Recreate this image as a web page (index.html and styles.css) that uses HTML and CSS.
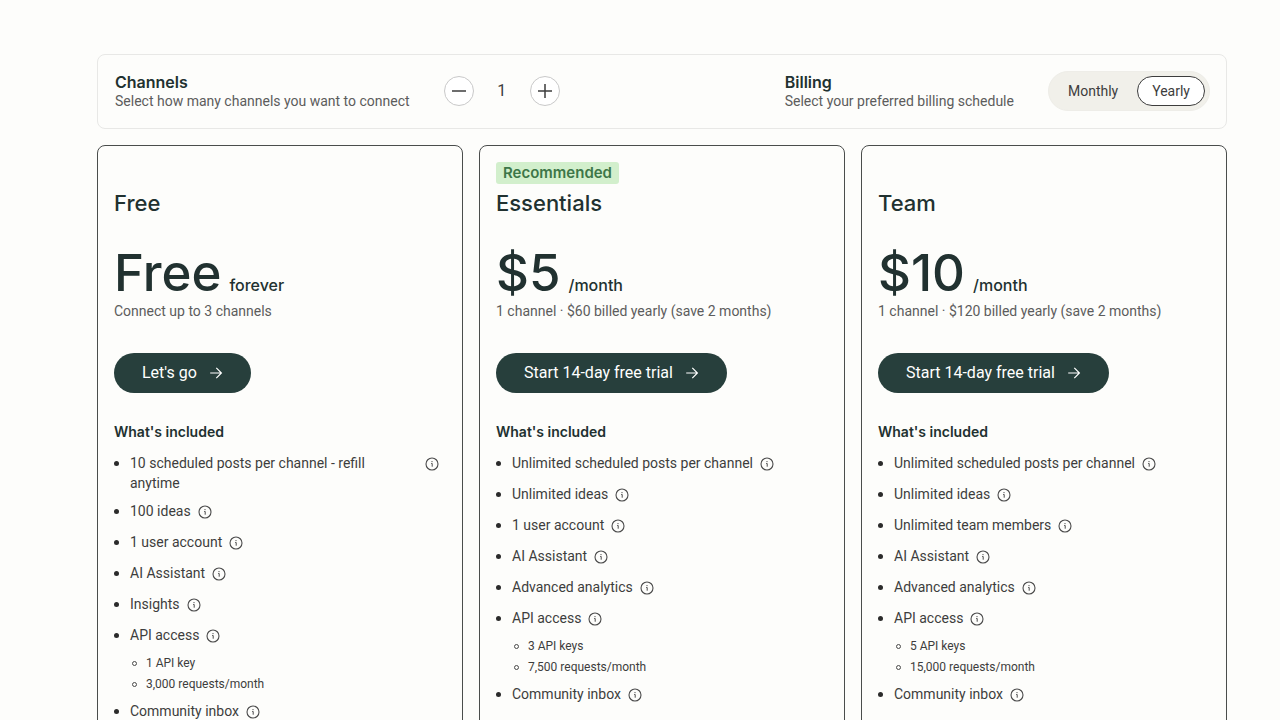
FILE: index.html
```
<!DOCTYPE html>
<html lang="en">
<head>
<meta charset="utf-8">
<meta name="viewport" content="width=device-width, initial-scale=1">
<title>Pricing</title>
<link rel="stylesheet" href="styles.css">
</head>
<body>
<svg class="sprite" aria-hidden="true">
  <symbol id="info" viewBox="0 0 14 14"><circle cx="7" cy="7" r="6" fill="none" stroke="currentColor" stroke-width="1.1"/><path d="M6.2 6.5H7.2V9.7" fill="none" stroke="currentColor"/><circle cx="7" cy="4.6" r=".65" fill="currentColor"/></symbol>
  <symbol id="arrow" viewBox="0 0 14 14"><path d="M1.2 7H12.4M7.3 1.9L12.4 7L7.3 12.1" fill="none" stroke="currentColor" stroke-width="1.2"/></symbol>
</svg>
<main class="page">
  <section class="options">
    <div class="option">
      <div>
        <h2 class="option-title">Channels</h2>
        <p class="option-text">Select how many channels you want to connect</p>
      </div>
      <div class="stepper">
        <button class="step" type="button" aria-label="Remove channel"><svg class="step-icon" viewBox="0 0 16 16"><path d="M1 8H15" stroke="currentColor" stroke-width="1.5"/></svg></button>
        <output class="count">1</output>
        <button class="step" type="button" aria-label="Add channel"><svg class="step-icon" viewBox="0 0 16 16"><path d="M1 8H15M8 1V15" stroke="currentColor" stroke-width="1.5"/></svg></button>
      </div>
    </div>
    <div class="option">
      <div>
        <h2 class="option-title">Billing</h2>
        <p class="option-text">Select your preferred billing schedule</p>
      </div>
      <div class="toggle">
        <button class="period" type="button" aria-pressed="false">Monthly</button>
        <button class="period period-on" type="button" aria-pressed="true">Yearly</button>
      </div>
    </div>
  </section>

  <section class="plans">
    <article class="plan">
      <div class="tag-row"></div>
      <h2 class="plan-name">Free</h2>
      <p class="price"><span class="amount">Free</span><span class="per">forever</span></p>
      <p class="terms">Connect up to 3 channels</p>
      <button class="cta" type="button">Let's go <svg class="arrow"><use href="#arrow"/></svg></button>
      <h3 class="included">What's included</h3>
      <ul class="features">
        <li class="feature"><span class="label">10 scheduled posts per channel - refill anytime</span><button class="info" type="button" aria-label="More info"><svg class="info-icon"><use href="#info"/></svg></button></li>
        <li class="feature"><span class="label">100 ideas</span><button class="info" type="button" aria-label="More info"><svg class="info-icon"><use href="#info"/></svg></button></li>
        <li class="feature"><span class="label">1 user account</span><button class="info" type="button" aria-label="More info"><svg class="info-icon"><use href="#info"/></svg></button></li>
        <li class="feature"><span class="label">AI Assistant</span><button class="info" type="button" aria-label="More info"><svg class="info-icon"><use href="#info"/></svg></button></li>
        <li class="feature"><span class="label">Insights</span><button class="info" type="button" aria-label="More info"><svg class="info-icon"><use href="#info"/></svg></button></li>
        <li class="feature"><span class="label">API access</span><button class="info" type="button" aria-label="More info"><svg class="info-icon"><use href="#info"/></svg></button>
          <ul class="details"><li class="detail">1 API key</li><li class="detail">3,000 requests/month</li></ul></li>
        <li class="feature"><span class="label">Community inbox</span><button class="info" type="button" aria-label="More info"><svg class="info-icon"><use href="#info"/></svg></button></li>
      </ul>
    </article>

    <article class="plan">
      <div class="tag-row"><span class="tag">Recommended</span></div>
      <h2 class="plan-name">Essentials</h2>
      <p class="price"><span class="amount">$5</span><span class="per">/month</span></p>
      <p class="terms">1 channel · $60 billed yearly (save 2 months)</p>
      <button class="cta" type="button">Start 14-day free trial <svg class="arrow"><use href="#arrow"/></svg></button>
      <h3 class="included">What's included</h3>
      <ul class="features">
        <li class="feature"><span class="label">Unlimited scheduled posts per channel</span><button class="info" type="button" aria-label="More info"><svg class="info-icon"><use href="#info"/></svg></button></li>
        <li class="feature"><span class="label">Unlimited ideas</span><button class="info" type="button" aria-label="More info"><svg class="info-icon"><use href="#info"/></svg></button></li>
        <li class="feature"><span class="label">1 user account</span><button class="info" type="button" aria-label="More info"><svg class="info-icon"><use href="#info"/></svg></button></li>
        <li class="feature"><span class="label">AI Assistant</span><button class="info" type="button" aria-label="More info"><svg class="info-icon"><use href="#info"/></svg></button></li>
        <li class="feature"><span class="label">Advanced analytics</span><button class="info" type="button" aria-label="More info"><svg class="info-icon"><use href="#info"/></svg></button></li>
        <li class="feature"><span class="label">API access</span><button class="info" type="button" aria-label="More info"><svg class="info-icon"><use href="#info"/></svg></button>
          <ul class="details"><li class="detail">3 API keys</li><li class="detail">7,500 requests/month</li></ul></li>
        <li class="feature"><span class="label">Community inbox</span><button class="info" type="button" aria-label="More info"><svg class="info-icon"><use href="#info"/></svg></button></li>
      </ul>
    </article>

    <article class="plan">
      <div class="tag-row"></div>
      <h2 class="plan-name">Team</h2>
      <p class="price"><span class="amount">$10</span><span class="per">/month</span></p>
      <p class="terms">1 channel · $120 billed yearly (save 2 months)</p>
      <button class="cta" type="button">Start 14-day free trial <svg class="arrow"><use href="#arrow"/></svg></button>
      <h3 class="included">What's included</h3>
      <ul class="features">
        <li class="feature"><span class="label">Unlimited scheduled posts per channel</span><button class="info" type="button" aria-label="More info"><svg class="info-icon"><use href="#info"/></svg></button></li>
        <li class="feature"><span class="label">Unlimited ideas</span><button class="info" type="button" aria-label="More info"><svg class="info-icon"><use href="#info"/></svg></button></li>
        <li class="feature"><span class="label">Unlimited team members</span><button class="info" type="button" aria-label="More info"><svg class="info-icon"><use href="#info"/></svg></button></li>
        <li class="feature"><span class="label">AI Assistant</span><button class="info" type="button" aria-label="More info"><svg class="info-icon"><use href="#info"/></svg></button></li>
        <li class="feature"><span class="label">Advanced analytics</span><button class="info" type="button" aria-label="More info"><svg class="info-icon"><use href="#info"/></svg></button></li>
        <li class="feature"><span class="label">API access</span><button class="info" type="button" aria-label="More info"><svg class="info-icon"><use href="#info"/></svg></button>
          <ul class="details"><li class="detail">5 API keys</li><li class="detail">15,000 requests/month</li></ul></li>
        <li class="feature"><span class="label">Community inbox</span><button class="info" type="button" aria-label="More info"><svg class="info-icon"><use href="#info"/></svg></button></li>
      </ul>
    </article>
  </section>
</main>
</body>
</html>
```
FILE: styles.css
```
:root {
  --ink: #213130;
  --text: #3d3d3d;
  --muted: #5c5c5c;
  --display: Inter, "Liberation Sans", sans-serif;
}
*, *::before { box-sizing: border-box; }
body {
  margin: 0;
  background: #fdfdfb;
  color: var(--text);
  font: 400 14px/20px Roboto, "Liberation Sans", sans-serif;
}
h2, h3, p, ul { margin: 0; padding: 0; }
ul { list-style: none; }
button { margin: 0; padding: 0; border: 0; background: none; color: inherit; font: inherit; cursor: pointer; }
.sprite { display: none; }

.page { padding: 54px 53px 48px 97px; }

.options {
  display: flex;
  justify-content: space-between;
  align-items: center;
  padding: 16px 16px 17px 17px;
  border: 1px solid #e8e8e6;
  border-radius: 8px;
}
.option { display: flex; align-items: center; gap: 34px; }
.option-title { color: var(--ink); font: 600 16px/20px var(--display); }
.option-text { color: var(--muted); line-height: 18px; }

.stepper { display: flex; align-items: center; }
.step {
  display: grid;
  place-items: center;
  width: 30px;
  height: 30px;
  border: 1px solid #c9c9c9;
  border-radius: 50%;
  background: #fff;
}
.step-icon { width: 16px; height: 16px; }
.count { width: 56px; text-align: center; font-size: 16px; }

.toggle {
  display: flex;
  gap: 4px;
  padding: 4px;
  border: 1px solid #eeede8;
  border-radius: 20px;
  background: #f1f0ea;
}
.period { height: 30px; padding: 0 14px; border: 1px solid transparent; border-radius: 16px; }
.period-on { border-color: #3d3d3d; background: #fff; }

.plans {
  display: grid;
  grid-template-columns: repeat(3, minmax(0, 1fr));
  gap: 16px;
  margin-top: 16px;
}
.plan { padding: 16px; border: 1px solid #4a4d4c; border-radius: 8px; }
.tag-row { display: flex; height: 22px; }
.tag {
  padding: 0 7px;
  border-radius: 3px;
  background: #d2efcc;
  color: #3d7648;
  font: 600 15px/22px var(--display);
}
.plan-name { margin: 4px 0 28px; color: var(--ink); font: 500 22px/30px var(--display); }
.price { display: flex; align-items: baseline; gap: 8px; color: var(--ink); font: 500 16px/20px var(--display); }
.amount { font-size: 51px; line-height: 54px; font-weight: 500; }
.terms { color: var(--muted); line-height: 22px; }
.cta {
  display: flex;
  align-items: center;
  gap: 12px;
  height: 40px;
  margin-top: 31px;
  padding: 0 28px;
  border-radius: 20px;
  background: #273f3c;
  color: #fff;
  font-size: 16px;
}
.arrow { width: 14px; height: 14px; }
.included { margin: 28px 0 10px; color: var(--ink); font: 600 14px/22px var(--display); }

.features { display: grid; gap: 8px; padding-right: 7px; }
.feature {
  display: grid;
  grid-template-columns: 16px auto auto 1fr;
}
.feature::before {
  content: "";
  width: 5px;
  height: 5px;
  margin-top: 8px;
  border-radius: 50%;
  background: #2b2b2b;
}
.label { min-height: 23px; }
.info { display: grid; place-items: center; align-self: start; height: 21px; padding-left: 7px; color: #4a4a4a; }
.info-icon { width: 14px; height: 14px; }
.details { grid-column: 2 / -1; display: grid; gap: 3px; margin-top: 6px; }
.detail { display: flex; align-items: center; gap: 9px; font-size: 12px; line-height: 18px; }
.detail::before { content: ""; width: 5px; height: 5px; margin-left: 2px; border: 1px solid #4a4a4a; border-radius: 50%; }
```
